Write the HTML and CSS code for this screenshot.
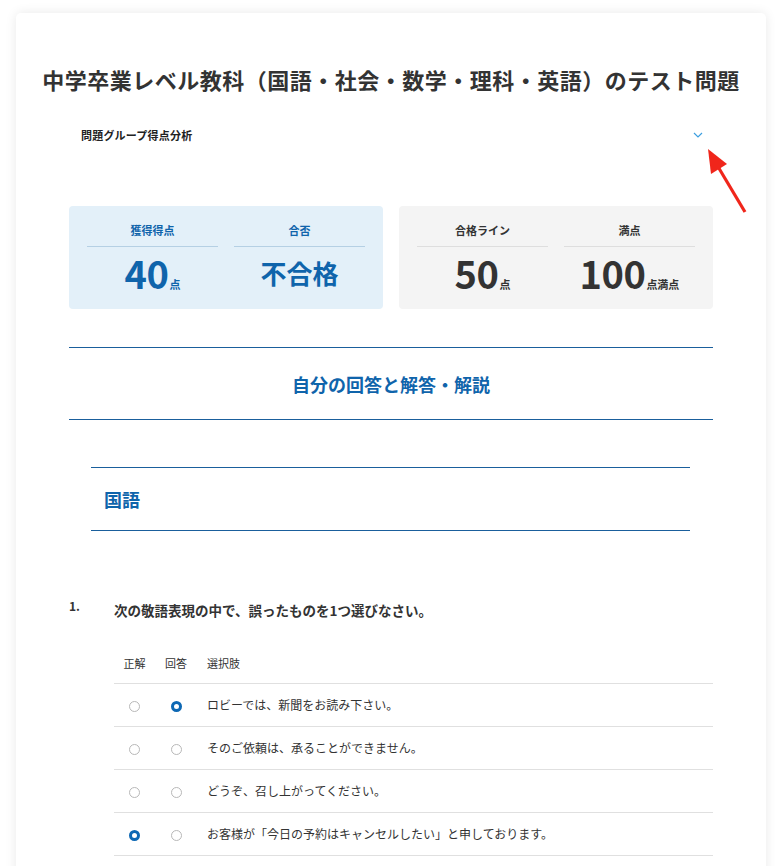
FILE: index.html
```html
<!DOCTYPE html>
<html lang="ja">
<head>
<meta charset="utf-8">
<title>テスト結果</title>
<link rel="stylesheet" href="styles.css">
</head>
<body>
<div class="page">
  <div class="card">
    <h1 class="title">中学卒業レベル教科（国語・社会・数学・理科・英語）のテスト問題</h1>
    <div class="group-toggle">
      <span>問題グループ得点分析</span>
      <svg class="chevron" width="10" height="6" viewBox="0 0 10 6"><path d="M1 1 L5 5 L9 1" fill="none" stroke="#3d9fe0" stroke-width="1.2"/></svg>
    </div>
    <div class="scores">
      <div class="score-box mine">
        <div class="score-col"><div class="label">獲得得点</div><div class="value">40<small>点</small></div></div>
        <div class="score-col"><div class="label">合否</div><div class="value result">不合格</div></div>
      </div>
      <div class="score-box info">
        <div class="score-col"><div class="label">合格ライン</div><div class="value">50<small>点</small></div></div>
        <div class="score-col"><div class="label">満点</div><div class="value">100<small>点満点</small></div></div>
      </div>
    </div>
    <h2 class="section-heading">自分の回答と解答・解説</h2>
    <div class="subject"><h3>国語</h3></div>
    <div class="question">
      <div class="q-head"><span class="num">1.</span><p>次の敬語表現の中で、誤ったものを1つ選びなさい。</p></div>
      <table class="choices">
        <thead><tr><th class="c1">正解</th><th class="c2">回答</th><th class="c3">選択肢</th></tr></thead>
        <tbody>
          <tr><td class="c1"><span class="radio"></span></td><td class="c2"><span class="radio on"></span></td><td class="c3">ロビーでは、新聞をお読み下さい。</td></tr>
          <tr><td class="c1"><span class="radio"></span></td><td class="c2"><span class="radio"></span></td><td class="c3">そのご依頼は、承ることができません。</td></tr>
          <tr><td class="c1"><span class="radio"></span></td><td class="c2"><span class="radio"></span></td><td class="c3">どうぞ、召し上がってください。</td></tr>
          <tr><td class="c1"><span class="radio on"></span></td><td class="c2"><span class="radio"></span></td><td class="c3">お客様が「今日の予約はキャンセルしたい」と申しております。</td></tr>
        </tbody>
      </table>
    </div>
  </div>
</div>
<svg class="annotation" width="60" height="80" viewBox="0 0 60 80">
  <line x1="45" y1="69" x2="17" y2="22" stroke="#f0261b" stroke-width="3.2"/>
  <polygon points="8,6 27,21 11,31" fill="#f0261b"/>
</svg>
</body>
</html>
```

FILE: styles.css
```css
* { box-sizing: border-box; }
html, body { margin: 0; padding: 0; background: #fff; }
body {
  font-family: "Noto Sans CJK JP", "Noto Sans", sans-serif;
  color: #333;
  position: relative;
}
.page { padding: 13px 9px 0 16px; }
.card {
  background: #fff;
  border-radius: 5px;
  box-shadow: 0 0 12px rgba(0,0,0,0.09);
  padding: 50px 53px 40px;
  min-height: 900px;
}
.title {
  margin: 0 -30px;
  text-align: center;
  font-size: 22px;
  letter-spacing: 0.5px;
  line-height: 32px;
  font-weight: 700;
  color: #333;
  white-space: nowrap;
}
.group-toggle {
  display: flex;
  justify-content: space-between;
  align-items: center;
  margin-top: 30px;
  padding: 0 10px 0 12px;
  height: 20px;
}
.group-toggle span { font-size: 11px; letter-spacing: 0.2px; font-weight: 700; color: #222; }
.chevron { display: block; }
.scores {
  display: grid;
  grid-template-columns: 1fr 1fr;
  gap: 16px;
  margin-top: 61px;
}
.score-box {
  border-radius: 4px;
  padding: 16px 18px 14px;
  display: grid;
  grid-template-columns: 1fr 1fr;
  gap: 16px;
}
.score-box.mine { background: #e3f0f9; color: #0f64ab; }
.score-box.info { background: #f4f4f4; color: #333; }
.label {
  text-align: center;
  font-size: 11px;
  font-weight: 700;
  line-height: 16px;
  padding-bottom: 8px;
  border-bottom: 1px solid #b5d0e4;
}
.info .label { border-bottom-color: #dedede; }
.value {
  text-align: center;
  font-size: 38px;
  font-weight: 700;
  line-height: 44px;
  height: 44px;
  margin-top: 4px;
  letter-spacing: -0.5px;
}
.value small { font-size: 11px; line-height: 1; letter-spacing: 0; margin-left: 1px; }
.value.result { font-size: 26px; letter-spacing: 0; }
.section-heading {
  margin: 38px 0 0;
  border-top: 1px solid #1a5f9c;
  border-bottom: 1px solid #1a5f9c;
  height: 73px;
  display: flex;
  align-items: center;
  justify-content: center;
  font-size: 18px;
  font-weight: 700;
  color: #0f64ab;
}
.subject {
  margin: 47px 23px 0 22px;
  border-top: 1px solid #1a5f9c;
  border-bottom: 1px solid #1a5f9c;
  height: 64px;
  display: flex;
  align-items: center;
  padding-left: 13px;
}
.subject h3 { margin: 0; font-size: 18px; font-weight: 700; color: #0f64ab; }
.question { margin-top: 69px; }
.q-head { display: flex; align-items: flex-start; }
.q-head .num { width: 45px; font-size: 12px; font-weight: 700; line-height: 20px; margin-top: -4px; }
.q-head p { margin: 0; font-size: 13.5px; font-weight: 700; line-height: 20px; }
.choices {
  margin: 23px 0 0 45px;
  width: calc(100% - 45px);
  border-collapse: collapse;
  font-size: 11px;
}
.choices th {
  font-weight: 400;
  height: 40px;
  padding: 0;
  text-align: center;
  border-bottom: 1px solid #e0e0e0;
  color: #333;
}
.choices td {
  height: 43px;
  text-align: center;
  border-bottom: 1px solid #e0e0e0;
  padding: 0;
  font-size: 12px;
}
.choices .c1 { width: 41px; }
.choices .c2 { width: 42px; }
.choices .c3 { text-align: left; padding-left: 10px; }
.radio {
  display: inline-block;
  width: 11px;
  height: 11px;
  border-radius: 50%;
  border: 1px solid #b8b8b8;
  vertical-align: middle;
  background: #fff;
}
.radio.on { border: 3px solid #0d68b4; }
.annotation { position: absolute; left: 700px; top: 143px; }
```
